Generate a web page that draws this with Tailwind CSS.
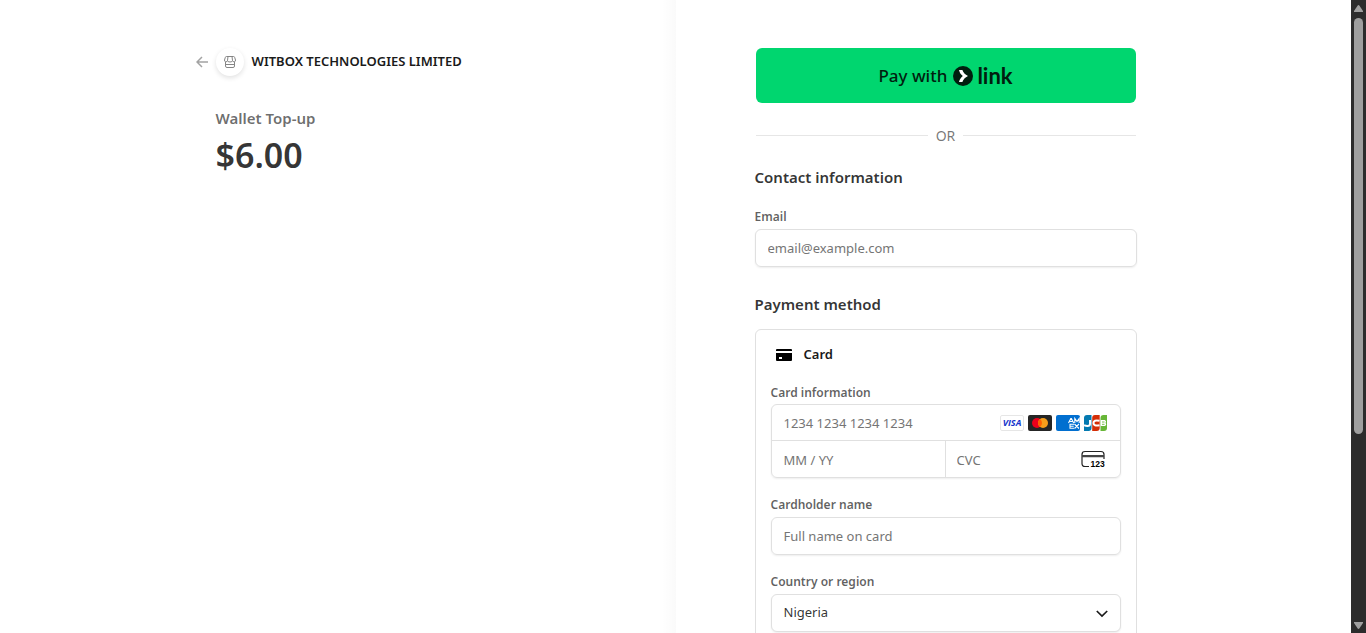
<!DOCTYPE html>
<html lang="en">
<head>
<meta charset="utf-8">
<meta name="viewport" content="width=device-width, initial-scale=1">
<title>WITBOX TECHNOLOGIES LIMITED</title>
<script src="https://cdn.jsdelivr.net/npm/@tailwindcss/browser@4"></script>
</head>
<body class="flex h-screen overflow-hidden bg-white font-['Segoe_UI','Noto_Sans',sans-serif] text-[#1a1a1a]">
<div class="relative min-w-0 flex-1 overflow-hidden">
  <div class="absolute inset-y-0 left-0 w-1/2 bg-linear-to-l from-black/2 to-transparent to-[14px]"></div>
  <div class="relative mx-auto flex max-w-[920px] justify-between pt-12">
    <header class="w-[380px]">
      <div class="flex h-7 items-center">
        <a href="#" aria-label="Back to WITBOX TECHNOLOGIES LIMITED" class="-ml-5 flex items-center">
          <svg class="mr-2 h-3 w-3" viewBox="0 0 12 12" fill="none" stroke="#a3a3a3" stroke-width="1.500"><path d="M12 6H1M6 1 1 6l5 5"/></svg>
          <span class="flex h-7 w-7 items-center justify-center rounded-full bg-white shadow-[0_2px_5px_rgba(0,0,0,0.12)]">
            <svg class="h-3 w-3" viewBox="0 0 12 12" fill="none" stroke="#858585" stroke-width="1"><path d="M2.500.5h7q1 0 1.200 1l.8 2.500a1.500 1.500 0 0 1-3 .5 2.500 1.500 0 0 1-5 0 1.500 1.500 0 0 1-3-.5l.8-2.500q.2-1 1.200-1zM3.500 4.500 4 .5M8.500 4.500 8 .5M1.500 6v4q0 1.500 1.500 1.500h6q1.500 0 1.500-1.500V6M1.500 8.500h9"/></svg>
          </span>
          <span class="ml-2 text-[13px] font-semibold whitespace-nowrap">WITBOX TECHNOLOGIES LIMITED</span>
        </a>
      </div>
      <h1 class="mt-8 text-[15px] leading-5 font-semibold text-[#1a1a1a]/65">Wallet Top-up</h1>
      <p class="mt-[3px] text-[34px] leading-12 font-semibold text-[#1a1a1a]/90">$6.00</p>
    </header>

    <main class="w-[380px]">
      <button type="button" class="flex h-[55px] w-full items-center justify-center rounded-[6px] bg-[#00d66f] text-[17px] font-medium text-[#011e0f]">
        <span>Pay with</span>
        <svg class="ml-[6px] h-5 w-5" viewBox="0 0 20 20"><circle cx="10" cy="10" r="10" fill="#011e0f"/><path d="M6 4h3.400c.8 2.500 2.700 4.700 5.600 6-2.900 1.300-4.800 3.500-5.600 6H6c.5-2.500 1.900-4.500 3.800-6C7.900 8.500 6.500 6.500 6 4z" fill="#fff"/></svg>
        <span class="ml-1 font-['Lato'] text-[22px] leading-6 font-bold">link</span>
      </button>
      <div class="mt-[22px] flex h-5 items-center gap-2 text-[14px] text-[#1a1a1a]/60">
        <span class="h-px flex-1 bg-[#e6e6e6]"></span><span>OR</span><span class="h-px flex-1 bg-[#e6e6e6]"></span>
      </div>

      <form class="-mx-px">
        <h2 class="mt-[22px] text-[15px] leading-5 font-semibold text-[#1a1a1a]/90">Contact information</h2>
        <label for="email" class="mt-[22px] block text-[12px] leading-4 font-semibold text-[#1a1a1a]/70">Email</label>
        <input id="email" type="email" placeholder="email@example.com" class="mt-1 h-[38px] w-full rounded-[6px] border border-[#e0e0e0] px-3 text-[13px] shadow-[0_1px_2px_rgba(0,0,0,0.07)] placeholder:text-[#757575]">

        <h2 class="mt-[27px] text-[15px] leading-5 font-semibold text-[#1a1a1a]/90">Payment method</h2>
        <section class="mt-[15px] rounded-[6px] border border-[#e0e0e0] px-[15px] pt-[15px] pb-8">
          <div class="flex h-5 items-center px-[5px]">
            <svg class="h-4 w-4" viewBox="0 0 16 16"><path d="M0 3q0-1 1-1h14q1 0 1 1v1H0z"/><path fill-rule="evenodd" d="M0 6h16v7q0 1-1 1H1q-1 0-1-1zm3 4v2h3v-2z"/></svg>
            <span class="ml-3 text-[13px] font-semibold">Card</span>
          </div>
          <fieldset class="mt-5">
            <legend class="text-[12px] leading-4 font-semibold text-[#1a1a1a]/70">Card information</legend>
            <div class="mt-[3px] overflow-hidden rounded-[6px] border border-[#e0e0e0] shadow-[0_1px_2px_rgba(0,0,0,0.07)]">
              <div class="flex h-[36px] items-center border-b border-[#e0e0e0] pr-3">
                <input type="text" aria-label="Card number" placeholder="1234 1234 1234 1234" class="h-full min-w-0 flex-1 px-3 pt-px text-[13px] placeholder:text-[#757575]">
                <div class="flex gap-1 font-['Open_Sans']">
                  <svg class="h-4 w-6" viewBox="0 0 24 16" role="img" aria-label="Visa"><rect x=".5" y=".5" width="23" height="15" rx="1.500" fill="#fff" stroke="#e6e6e6"/><text x="12" y="11.300" text-anchor="middle" font-size="9" font-weight="700" font-style="italic" fill="#1434cb">VISA</text></svg>
                  <svg class="h-4 w-6" viewBox="0 0 24 16" role="img" aria-label="Mastercard"><rect width="24" height="16" rx="2" fill="#252525"/><circle cx="9" cy="8" r="5" fill="#eb001b"/><circle cx="15" cy="8" r="5" fill="#f79e1b"/><path d="M12 4a5 5 0 0 1 0 8 5 5 0 0 1 0-8" fill="#ff5f00"/></svg>
                  <svg class="h-4 w-6" viewBox="0 0 24 16" role="img" aria-label="American Express"><rect width="24" height="16" rx="2" fill="#016fd0"/><g fill="none" stroke="#fff" stroke-width="1.100"><path d="m12.500 8 2.300-4.500h.6L17.700 8M13.500 6.500h3.200M18.800 8V3.500L21 6.500l2.200-3V8M24 9.500M18 9.200h-4v4h4M14 11.200h3.700M18.500 9l4.500 4.500M23 9l-4.500 4.500"/></g></svg>
                  <svg class="h-4 w-6" viewBox="0 0 24 16" role="img" aria-label="JCB"><path d="M3 0h4.500v13q0 3-3 3H0V3q0-3 3-3" fill="#047ab1"/><path d="M11 0h4.700v13q0 3-3 3H8.200V3q0-3 2.800-3" fill="#d42d06"/><path d="M19.500 0H23v13q0 3-3 3h-3.500V3q0-3 3-3" fill="#67b637"/><g fill="none" stroke="#fff" stroke-width="2"><path d="M6 5v4q0 2-2.500 2T0 10M15.500 5.800q-6-1.300-6 2.200t6 2.200"/></g><path d="M16.700 5h4.300q2 1.300.5 3 1.700 1.700-.5 3h-4.300z" fill="#fff"/><path d="M18 7h2.500M18 9.300h2.500" stroke="#67b637" stroke-width=".9"/></svg>
                </div>
              </div>
              <div class="flex h-[36px]">
                <input type="text" aria-label="Expiration" placeholder="MM / YY" class="h-full w-1/2 border-r border-[#e0e0e0] px-3 pt-px text-[13px] placeholder:text-[#757575]">
                <div class="flex w-1/2 items-center pr-[15px]">
                  <input type="text" aria-label="CVC" placeholder="CVC" class="h-full min-w-0 flex-1 px-[11px] pt-px text-[13px] placeholder:text-[#757575]">
                  <svg class="h-[18px] w-6" viewBox="0 0 24 18" role="img" aria-label="Security code"><path d="M8 16.500H4q-3 0-3-3v-9q0-3 3-3h16q3 0 3 3V9" fill="none" stroke="#222" stroke-width="1.200"/><path d="M1 5h22v2.200H1z" fill="#444"/><text x="9.500" y="17" font-family="Liberation Sans" font-size="8.500" font-weight="700">123</text></svg>
                </div>
              </div>
            </div>
          </fieldset>
          <label for="name" class="mt-[19px] block text-[12px] leading-4 font-semibold text-[#1a1a1a]/70">Cardholder name</label>
          <input id="name" type="text" placeholder="Full name on card" class="mt-1 h-[38px] w-full rounded-[6px] border border-[#e0e0e0] px-3 text-[13px] shadow-[0_1px_2px_rgba(0,0,0,0.07)] placeholder:text-[#757575]">
          <label for="country" class="mt-[19px] block text-[12px] leading-4 font-semibold text-[#1a1a1a]/70">Country or region</label>
          <div class="relative mt-1">
            <select id="country" class="h-[38px] w-full appearance-none rounded-[6px] border border-[#e0e0e0] bg-white px-3 text-[13px] text-[#1a1a1a]/90 shadow-[0_1px_2px_rgba(0,0,0,0.07)]"><option>Nigeria</option></select>
            <svg class="pointer-events-none absolute top-[13px] right-[13px] h-3 w-3" viewBox="0 0 12 12" fill="none" stroke="#1a1a1a" stroke-width="1.700"><path d="m.8 4 5.200 5 5.200-5"/></svg>
          </div>
        </section>
      </form>
    </main>
  </div>
</div>
<aside aria-hidden="true" class="flex w-[15px] flex-col items-center bg-[#2c2c2c]">
  <svg class="mt-[5px] h-[7px] w-[9px]" viewBox="0 0 9 7" fill="#9f9f9f"><path d="M3.500.7q1-1.400 2 0L9 6v1H0V6z"/></svg>
  <span class="mt-[6px] h-[416px] w-[9px] rounded-full bg-[#9f9f9f]"></span>
  <svg class="mt-auto mb-1 h-[7px] w-[9px]" viewBox="0 0 9 7" fill="#9f9f9f"><path d="M3.500 6.300q1 1.400 2 0L9 1V0H0v1z"/></svg>
</aside>
</body>
</html>
